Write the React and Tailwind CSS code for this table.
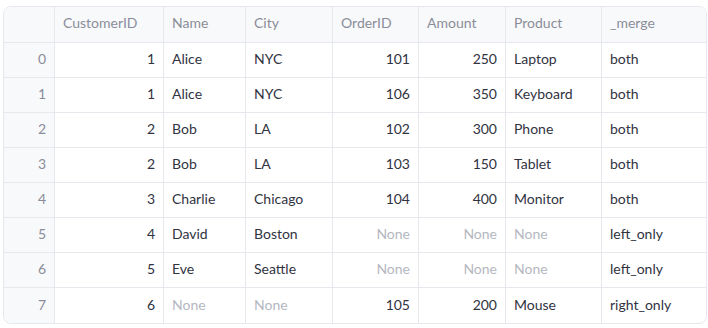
const COLS = ["CustomerID", "Name", "City", "OrderID", "Amount", "Product", "_merge"];
const RIGHT = [true, false, false, true, true, false, false];

const ROWS = [
  [1, "Alice", "NYC", 101, 250, "Laptop", "both"],
  [1, "Alice", "NYC", 106, 350, "Keyboard", "both"],
  [2, "Bob", "LA", 102, 300, "Phone", "both"],
  [2, "Bob", "LA", 103, 150, "Tablet", "both"],
  [3, "Charlie", "Chicago", 104, 400, "Monitor", "both"],
  [4, "David", "Boston", null, null, null, "left_only"],
  [5, "Eve", "Seattle", null, null, null, "left_only"],
  [6, null, null, 105, 200, "Mouse", "right_only"],
];

export default function App() {
  return (
    <div className="w-[708px] h-[328px] bg-white pt-[6px] pl-[3px]" style={{ fontFamily: "Lato, 'Noto Sans', sans-serif" }}>
      <div className="w-[704px] border border-[#e6e8ee] rounded-lg overflow-hidden text-[14px]">
        <div className="grid grid-cols-[51px_109px_82px_87px_86px_87px_96px_104px] bg-[#f8f9fb] text-[#8a8d99]">
          <div className="h-[36px] border-r border-b border-[#e6e8ee]" />
          {COLS.map((c, i) => (
            <div
              key={c}
              className={`h-[36px] flex items-center px-2 pb-[4px] border-b border-[#e6e8ee] ${i < COLS.length - 1 ? "border-r" : ""}`}
            >
              {c}
            </div>
          ))}
        </div>
        {ROWS.map((r, ri) => (
          <div key={ri} className="grid grid-cols-[51px_109px_82px_87px_86px_87px_96px_104px] text-[#31333f]">
            <div
              className={`h-[35px] flex items-center justify-end px-2 pb-[3px] bg-[#f8f9fb] text-[#8a8d99] border-r border-[#e6e8ee] ${ri < ROWS.length - 1 ? "border-b" : ""}`}
            >
              {ri}
            </div>
            {r.map((v, ci) => (
              <div
                key={ci}
                className={`h-[35px] flex items-center px-2 pb-[3px] border-[#e6e8ee] ${RIGHT[ci] ? "justify-end" : ""} ${ci < r.length - 1 ? "border-r" : ""} ${ri < ROWS.length - 1 ? "border-b" : ""} ${v === null ? "text-[#b4b7c0]" : ""}`}
              >
                {v === null ? "None" : v}
              </div>
            ))}
          </div>
        ))}
      </div>
    </div>
  );
}
